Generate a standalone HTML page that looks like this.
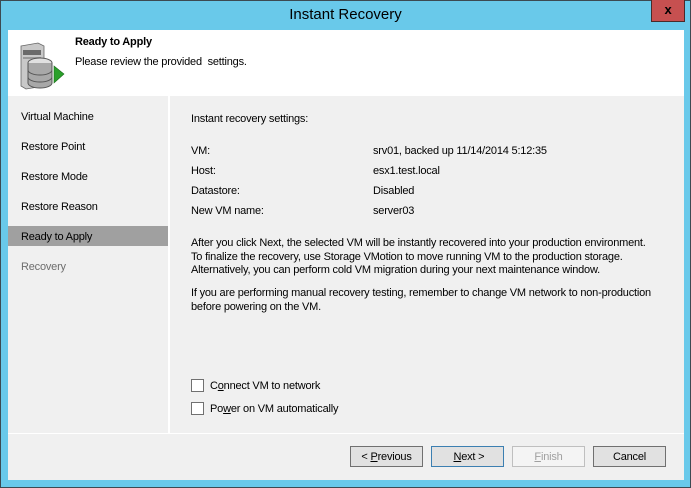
<!DOCTYPE html>
<html><head><style>
*{margin:0;padding:0;box-sizing:border-box}
body{width:691px;height:488px;background:#69c9ea;position:relative;overflow:hidden;font-family:"Liberation Sans",sans-serif;font-size:11px;color:#000;letter-spacing:-0.2px}
.a{position:absolute;white-space:nowrap}
.frame{position:absolute;left:0;top:0;width:691px;height:488px;border:1px solid #3c4a52}
.btn{position:absolute;top:446px;width:73px;height:21px;border:1px solid #707070;background:#e1e1e1;text-align:center;line-height:20px;font-size:11px}
.cb{position:absolute;width:13px;height:13px;border:1px solid #707070;background:#fff}
</style></head><body>
<div class="frame"></div>
<div class="a" style="left:0;top:6px;width:691px;text-align:center;font-size:15px;letter-spacing:0">Instant Recovery</div>
<div class="a" style="left:651px;top:0;width:34px;height:22px;background:#c75050;border:1px solid #4a2a2a;border-top:none;font-weight:bold;font-size:13px;text-align:center;line-height:19px">x</div>
<div class="a" style="left:8px;top:30px;width:676px;height:450px;background:#f0f0f0"></div>
<div class="a" style="left:8px;top:30px;width:676px;height:66px;background:#fff"></div>
<svg class="a" style="left:18px;top:40px" width="52" height="50" viewBox="0 0 52 50">
<path d="M3 6 L20 3 L26 6 L26 46 L8 49 L3 46Z" fill="#c8c8c8" stroke="#666" stroke-width="0.8"/>
<rect x="5" y="10" width="18" height="5" fill="#6a6a6a"/>
<rect x="5" y="17" width="18" height="2" fill="#999"/>
<ellipse cx="22" cy="23" rx="12" ry="5" fill="#e0e0e0" stroke="#555"/>
<path d="M10 23 V43 A12 5 0 0 0 34 43 V23" fill="#a8a8a8" stroke="#555"/>
<path d="M10 30 A12 5 0 0 0 34 30 M10 37 A12 5 0 0 0 34 37" fill="none" stroke="#555"/>
<path d="M36 26 L46 34 L36 43Z" fill="#2aa02a" stroke="#1a6a1a" stroke-width="0.6"/>
</svg>
<div class="a" style="left:75px;top:36px;font-weight:bold">Ready to Apply</div>
<div class="a" style="left:75px;top:56px">Please review the provided&nbsp; settings.</div>
<div class="a" style="left:168px;top:96px;width:2px;height:338px;background:#fff"></div>
<div class="a" style="left:8px;top:433px;width:676px;height:1px;background:#fff"></div>
<div class="a" style="left:21px;top:111px">Virtual Machine</div>
<div class="a" style="left:21px;top:141px">Restore Point</div>
<div class="a" style="left:21px;top:171px">Restore Mode</div>
<div class="a" style="left:21px;top:201px">Restore Reason</div>
<div class="a" style="left:8px;top:226px;width:160px;height:20px;background:#a0a0a0"></div>
<div class="a" style="left:21px;top:231px">Ready to Apply</div>
<div class="a" style="left:21px;top:261px;color:#6d6d6d">Recovery</div>
<div class="a" style="left:191px;top:113px">Instant recovery settings:</div>
<div class="a" style="left:191px;top:145px">VM:</div><div class="a" style="left:373px;top:145px">srv01, backed up 11/14/2014 5:12:35</div>
<div class="a" style="left:191px;top:165px">Host:</div><div class="a" style="left:373px;top:165px">esx1.test.local</div>
<div class="a" style="left:191px;top:185px">Datastore:</div><div class="a" style="left:373px;top:185px">Disabled</div>
<div class="a" style="left:191px;top:205px">New VM name:</div><div class="a" style="left:373px;top:205px">server03</div>
<div class="a" style="left:191px;top:237px;line-height:13.5px">After you click Next, the selected VM will be instantly recovered into your production environment.<br>To finalize the recovery, use Storage VMotion to move running VM to the production storage.<br>Alternatively, you can perform cold VM migration during your next maintenance window.</div>
<div class="a" style="left:191px;top:287px;line-height:13.5px">If you are performing manual recovery testing, remember to change VM network to non-production<br>before powering on the VM.</div>
<div class="cb" style="left:191px;top:379px"></div><div class="a" style="left:210px;top:380px">C<u>o</u>nnect VM to network</div>
<div class="cb" style="left:191px;top:402px"></div><div class="a" style="left:210px;top:403px">Po<u>w</u>er on VM automatically</div>
<div class="btn" style="left:350px">&lt; <u>P</u>revious</div>
<div class="btn" style="left:431px;border-color:#3c7fb1">&nbsp;<u>N</u>ext &gt;</div>
<div class="btn" style="left:512px;border-color:#bfbfbf;background:#f4f4f4;color:#a0a0a0"><u>F</u>inish</div>
<div class="btn" style="left:593px">Cancel</div>
</body></html>
